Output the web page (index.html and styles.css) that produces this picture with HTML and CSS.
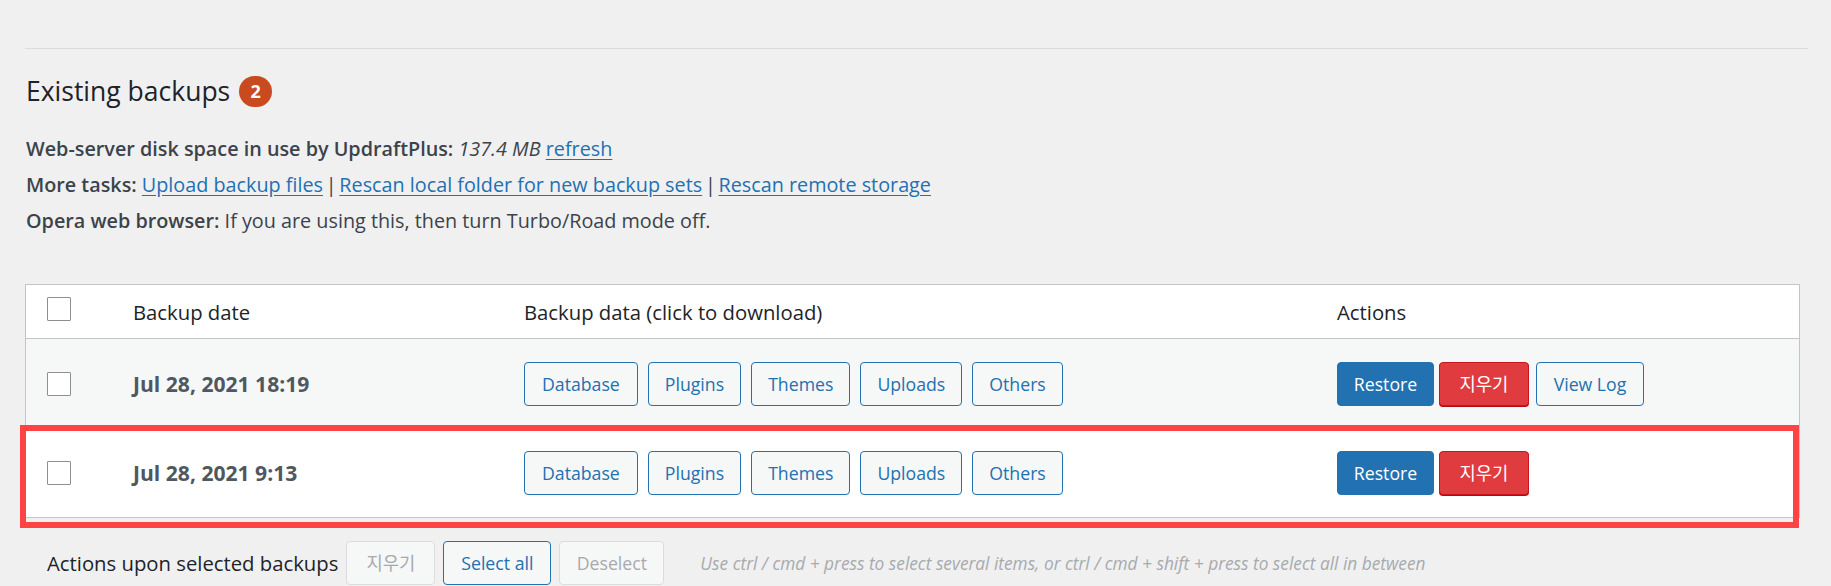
FILE: index.html
```html
<!DOCTYPE html>
<html lang="en">
<head>
<meta charset="utf-8">
<title>Existing backups</title>
<link rel="stylesheet" href="styles.css">
</head>
<body>
<div class="wrap">
  <hr class="sep">
  <h3 class="title">Existing backups <span class="count">2</span></h3>
  <div class="info">
    <p><strong>Web-server disk space in use by UpdraftPlus:</strong> <em>137.4 MB</em> <a href="#">refresh</a></p>
    <p><strong>More tasks:</strong> <a href="#">Upload backup files</a><span class="bar"> | </span><a href="#">Rescan local folder for new backup sets</a><span class="bar"> | </span><a href="#">Rescan remote storage</a></p>
    <p><strong>Opera web browser:</strong> If you are using this, then turn Turbo/Road mode off.</p>
  </div>

  <div class="table-wrap">
    <table class="backups">
      <colgroup>
        <col class="c-cb">
        <col class="c-date">
        <col class="c-data">
        <col class="c-act">
      </colgroup>
      <thead>
        <tr>
          <th class="cb"><span class="checkbox"></span></th>
          <th>Backup date</th>
          <th>Backup data (click to download)</th>
          <th>Actions</th>
        </tr>
      </thead>
      <tbody>
        <tr class="alt">
          <td class="cb"><span class="checkbox"></span></td>
          <td class="date">Jul 28, 2021 18:19</td>
          <td>
            <div class="btns">
              <button class="btn">Database</button>
              <button class="btn">Plugins</button>
              <button class="btn">Themes</button>
              <button class="btn">Uploads</button>
              <button class="btn">Others</button>
            </div>
          </td>
          <td>
            <div class="acts">
              <button class="btn primary">Restore</button>
              <button class="btn danger">지우기</button>
              <button class="btn log">View Log</button>
            </div>
          </td>
        </tr>
        <tr>
          <td class="cb"><span class="checkbox"></span></td>
          <td class="date">Jul 28, 2021 9:13</td>
          <td>
            <div class="btns">
              <button class="btn">Database</button>
              <button class="btn">Plugins</button>
              <button class="btn">Themes</button>
              <button class="btn">Uploads</button>
              <button class="btn">Others</button>
            </div>
          </td>
          <td>
            <div class="acts">
              <button class="btn primary">Restore</button>
              <button class="btn danger">지우기</button>
            </div>
          </td>
        </tr>
      </tbody>
    </table>
    <div class="highlight"></div>
  </div>

  <div class="bulk">
    <span class="bulk-label">Actions upon selected backups</span>
    <button class="btn disabled">지우기</button>
    <button class="btn sel">Select all</button>
    <button class="btn disabled desel">Deselect</button>
    <span class="hint">Use ctrl / cmd + press to select several items, or ctrl / cmd + shift + press to select all in between</span>
  </div>
</div>
</body>
</html>
```

FILE: styles.css
```css
* { box-sizing: border-box; }

html, body {
  margin: 0;
  padding: 0;
  background: #f0f0f1;
}

body {
  font-family: "Open Sans", "Noto Sans CJK KR", sans-serif;
  color: #3c434a;
  font-size: 19.8px;
  overflow: hidden;
}

.wrap {
  padding: 0 31px 0 25px;
}

.sep {
  margin: 48px -8px 0 0;
  border: 0;
  border-top: 1px solid #dcdcde;
  height: 0;
}

.title {
  margin: 24px 0 0 1px;
  font-size: 26.5px;
  line-height: 36px;
  font-weight: 500;
  color: #1d2327;
  display: flex;
  align-items: center;
}

.count {
  display: inline-flex;
  align-items: center;
  justify-content: center;
  width: 33px;
  height: 31px;
  margin-left: 9px;
  border-radius: 16px;
  background: #ca4a1f;
  color: #fff;
  font-size: 18px;
  font-weight: 700;
  line-height: 1;
}

.info {
  margin: 22px 0 0 1px;
}

.info p {
  margin: 0;
  line-height: 36px;
}

.info strong {
  font-weight: 600;
}

.info a {
  color: #2271b1;
  text-decoration: underline;
  text-underline-offset: 3px;
}

.info .bar {
  word-spacing: -2.4px;
}

.table-wrap {
  position: relative;
  margin-top: 45px;
}

.backups {
  width: 100%;
  table-layout: fixed;
  border-collapse: separate;
  border-spacing: 0;
  border: 1px solid #c3c4c7;
  background: #fff;
  font-size: 20.3px;
}

.c-cb { width: 97px; }
.c-date { width: 391px; }
.c-data { width: 813px; }

.backups th {
  height: 54px;
  text-align: left;
  font-weight: 400;
  color: #1d2327;
  padding: 0 0 0 10px;
  border-bottom: 1px solid #c3c4c7;
  vertical-align: middle;
}

.backups td {
  height: 89px;
  padding: 0 0 0 10px;
  vertical-align: middle;
}

.backups .cb {
  padding-left: 21px;
}

.backups th.cb .checkbox {
  position: relative;
  top: -3px;
}

.backups tr.alt td {
  background: #f6f7f7;
}

.checkbox {
  display: block;
  width: 24px;
  height: 24px;
  border: 1px solid #8c8f94;
  border-radius: 1px;
  background: #fff;
}

.date {
  font-weight: 700;
  font-size: 21.1px;
  color: #50575e;
}

.btns,
.acts {
  display: flex;
  align-items: flex-start;
  gap: 10px;
}

.acts {
  gap: 5px;
}

.btn {
  font-family: "Open Sans", "Noto Sans CJK KR", sans-serif;
  font-size: 17.7px;
  height: 44px;
  line-height: 42px;
  padding: 0 16px;
  border: 1px solid #2271b1;
  border-radius: 4px;
  background: #f6f7f7;
  color: #2271b1;
  cursor: pointer;
  white-space: nowrap;
}

.btns .btn:first-child {
  padding: 0 17px;
}

.btn.primary {
  background: #2271b1;
  color: #fff;
  border-color: #2271b1;
  width: 97px;
  padding: 0;
}

.btn.danger {
  background: #e03b3f;
  border-color: #c9161d;
  color: #fff;
  width: 90px;
  padding: 0;
  box-shadow: 0 1px 0 #b30b10;
}

.btn.log {
  margin-left: 2px;
  width: 108px;
  padding: 0;
}

.highlight {
  position: absolute;
  left: -5px;
  top: 141px;
  width: 1779px;
  height: 103px;
  border: 6px solid #fd4343;
  pointer-events: none;
}

.bulk {
  display: flex;
  align-items: center;
  margin-top: 23px;
  padding-left: 22px;
  height: 44px;
}

.bulk-label {
  font-size: 20.3px;
  color: #1d2327;
  margin-right: 8px;
}

.bulk .btn {
  margin-right: 8px;
}

.btn.disabled {
  color: #a7aaad;
  border-color: #dcdcde;
  background: #f6f7f7;
  cursor: default;
}

.bulk .btn.disabled:first-of-type {
  width: 89px;
  padding: 0;
}

.btn.sel {
  width: 108px;
  padding: 0;
}

.btn.desel {
  width: 105px;
  padding: 0;
  margin-right: 36px;
}

.hint {
  font-style: italic;
  font-size: 17.3px;
  color: #a7aaad;
}
```
